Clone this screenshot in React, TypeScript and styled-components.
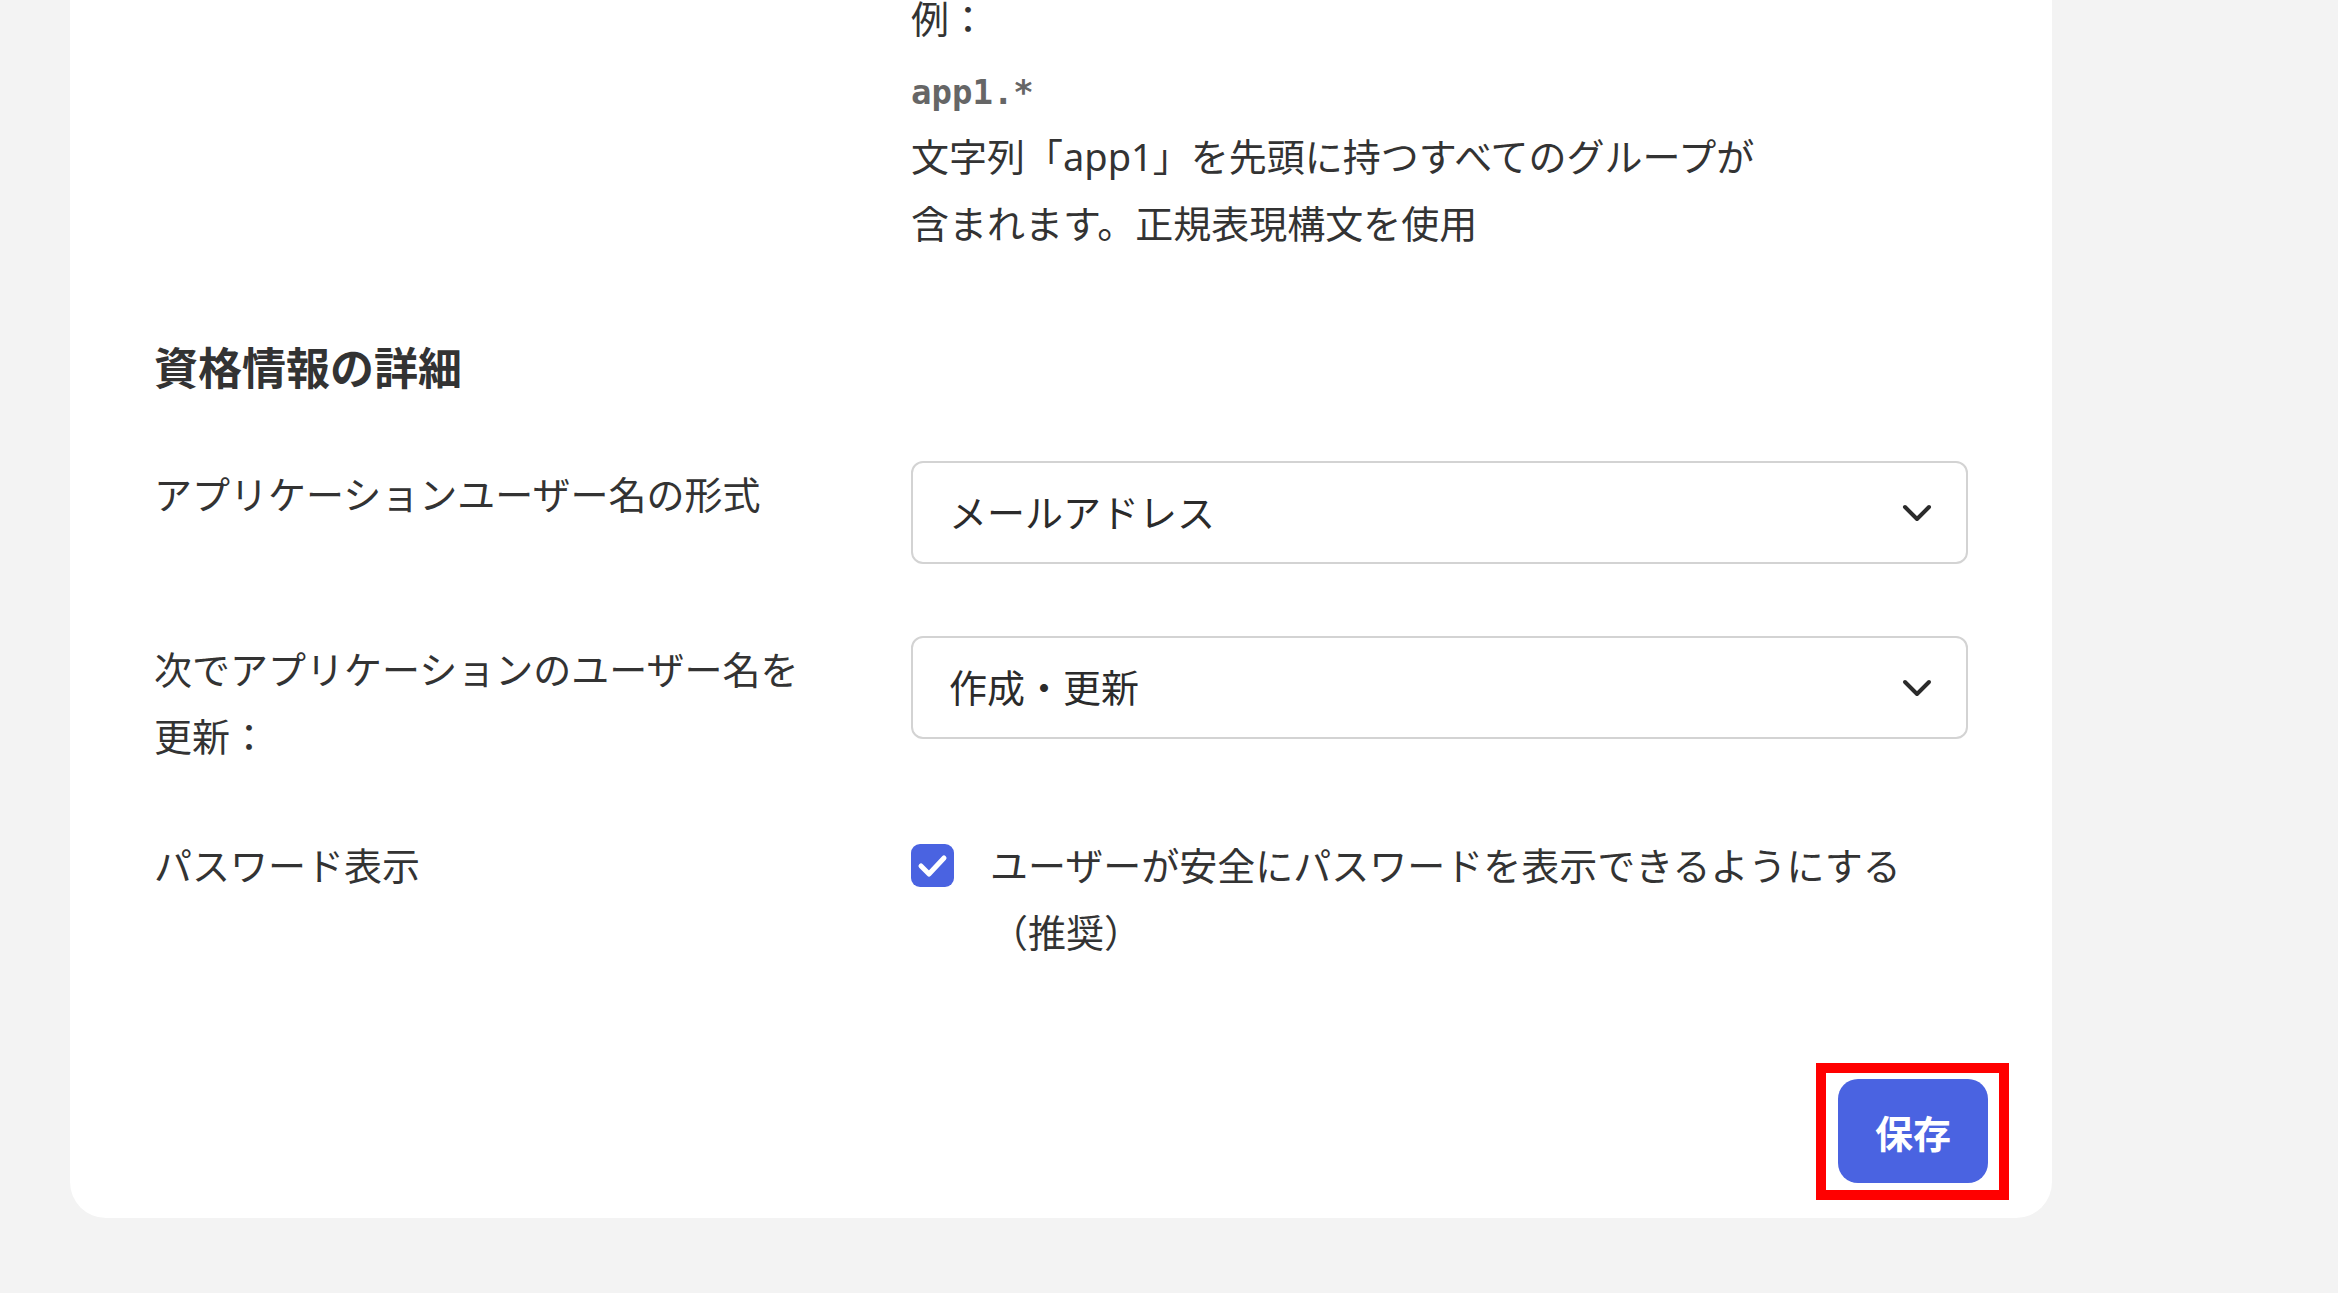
import React from 'react'
import styled, { createGlobalStyle } from 'styled-components'

const GlobalStyle = createGlobalStyle`
  html, body {
    margin: 0;
    padding: 0;
    background: #f3f3f3;
  }

  body {
    font-family: "Noto Sans", "Noto Sans CJK JP", sans-serif;
    color: #333;
  }
`;

interface IFieldOption {
  label: string;
  value: string;
}

const nameFormats: IFieldOption[] = [
  { label: 'メールアドレス', value: 'email' },
];

const updateTimings: IFieldOption[] = [
  { label: '作成・更新', value: 'create_update' },
];

function ChevronIcon() {
  return (
    <svg width="30" height="18" viewBox="0 0 30 18" fill="none">
      <polyline points="3,3 15,15 27,3" stroke="#2b2b2b" strokeWidth="4" strokeLinecap="round" strokeLinejoin="round" />
    </svg>
  );
}

function SelectBox({ options }: { options: IFieldOption[] }) {
  return (
    <SelectStyle>
      <span className="value">{options[0].label}</span>
      <ChevronIcon />
    </SelectStyle>
  );
}

function CheckBox({ checked, label }: { checked: boolean; label: string }) {
  return (
    <CheckStyle>
      <CheckMark $checked={checked}>
        {checked && (
          <svg width="43" height="43" viewBox="0 0 43 43" fill="none">
            <polyline points="10,22 18,30 33,14" stroke="#fff" strokeWidth="5" strokeLinecap="round" strokeLinejoin="round" />
          </svg>
        )}
      </CheckMark>
      <span className="text">{label}</span>
    </CheckStyle>
  );
}

function App() {
  return (
    <>
      <GlobalStyle />
      <Page>
        <Card>
          <FieldRow $spacing={0}>
            <div />
            <Hint>
              <p>例：</p>
              <code>app1.*</code>
              <p>文字列「app1」を先頭に持つすべてのグループが含まれます。正規表現構文を使用</p>
            </Hint>
          </FieldRow>

          <SectionTitle>資格情報の詳細</SectionTitle>

          <FieldRow $spacing={72}>
            <Label>アプリケーションユーザー名の形式</Label>
            <SelectBox options={nameFormats} />
          </FieldRow>

          <FieldRow $spacing={62}>
            <Label>次でアプリケーションのユーザー名を更新：</Label>
            <SelectBox options={updateTimings} />
          </FieldRow>

          <FieldRow $spacing={0}>
            <Label>パスワード表示</Label>
            <CheckBox checked label="ユーザーが安全にパスワードを表示できるようにする（推奨）" />
          </FieldRow>

          <Footer>
            <HighlightFrame>
              <SaveButton type="button">保存</SaveButton>
            </HighlightFrame>
          </Footer>
        </Card>
      </Page>
    </>
  );
}

const Page = styled.div`
  min-height: 100vh;
  padding: 0 0 0 70px;
  background: #f3f3f3;
`;

const Card = styled.div`
  width: 1982px;
  box-sizing: border-box;
  display: flex;
  flex-direction: column;
  background: #fff;
  border-radius: 0 0 36px 36px;
  padding: 0 43px 18px 84px;
`;

const FieldRow = styled.div<{ $spacing: number }>`
  display: grid;
  grid-template-columns: 670px 1fr;
  column-gap: 87px;
  margin-bottom: ${({ $spacing }) => $spacing}px;
  padding-right: 41px;
  font-size: 38px;
  line-height: 67px;
`;

const Hint = styled.div`
  margin-top: -15px;
  max-width: 868px;

  p {
    margin: 0;
    color: #333;
  }

  code {
    display: block;
    margin-top: 7px;
    margin-bottom: -3px;
    font-family: "DejaVu Sans Mono", "Liberation Mono", monospace;
    font-size: 34px;
    font-weight: 600;
    color: #666;
  }
`;

const SectionTitle = styled.h2`
  margin: 78px 0 60px;
  font-size: 44px;
  line-height: 66px;
  font-weight: bold;
  color: #333;
`;

const Label = styled.div`
  color: #333;
`;

const SelectStyle = styled.div`
  height: 103px;
  box-sizing: border-box;
  display: flex;
  align-items: center;
  justify-content: space-between;
  padding: 0 34px 0 36px;
  border: 2px solid #d3d3d3;
  border-radius: 12px;
  background: #fff;

  .value {
    color: #2b2b2b;
  }

  svg {
    flex-shrink: 0;
  }
`;

const CheckStyle = styled.label`
  display: flex;
  align-items: flex-start;
  gap: 36px;

  .text {
    flex: 1;
    color: #333;
  }
`;

const CheckMark = styled.span<{ $checked: boolean }>`
  flex-shrink: 0;
  width: 43px;
  height: 43px;
  margin-top: 12px;
  border-radius: 9px;
  background: ${({ $checked }) => ($checked ? '#4a63e1' : '#fff')};
  border: ${({ $checked }) => ($checked ? 'none' : '2px solid #c8c8c8')};

  svg {
    display: block;
  }
`;

const Footer = styled.div`
  display: flex;
  justify-content: flex-end;
  margin-top: 97px;
`;

const HighlightFrame = styled.div`
  border: 10px solid #ff0000;
  padding: 6px 11px 7px 12px;
`;

const SaveButton = styled.button`
  display: block;
  width: 150px;
  height: 104px;
  border: 0;
  border-radius: 20px;
  background: #4a63e1;
  color: #fff;
  font-family: "Noto Sans", "Noto Sans CJK JP", sans-serif;
  font-size: 38px;
  font-weight: bold;
  cursor: pointer;
`;

export default App
